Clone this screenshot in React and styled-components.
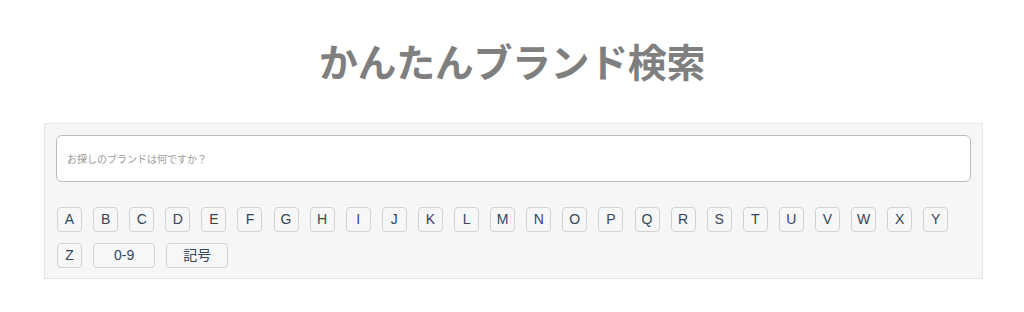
import React from "react";
import styled, { createGlobalStyle } from "styled-components";

const GlobalStyle = createGlobalStyle`
  body {
    margin: 0;
    background: #ffffff;
    font-family: "Liberation Sans", "Noto Sans CJK JP", sans-serif;
  }
`;

const Page = styled.div`
  width: 1024px;
  padding-top: 32px;
`;

const Title = styled.h1`
  margin: 0 0 35px;
  text-align: center;
  font-family: "Noto Sans CJK JP", sans-serif;
  font-weight: 700;
  font-size: 39px;
  line-height: 56px;
  color: #7f7f7f;
  letter-spacing: -0.4px;
`;

const Panel = styled.div`
  margin: 0 41px 0 44px;
  padding: 11px 11px 10px;
  background: #f6f6f6;
  border: 1px solid #e6e6e6;
`;

const SearchInput = styled.input`
  display: block;
  box-sizing: border-box;
  width: 100%;
  height: 47px;
  padding: 0 10px;
  border: 1px solid #bdbdbd;
  border-radius: 6px;
  background: #ffffff;
  font-family: "Noto Sans CJK JP", sans-serif;
  font-size: 10px;
  outline: none;
  &::placeholder {
    color: #9a9a9a;
  }
`;

const Keys = styled.div`
  display: flex;
  flex-wrap: wrap;
  column-gap: 11.1px;
  row-gap: 11px;
  margin-top: 25px;
  padding-left: 1px;
  width: 905px;
`;

const Key = styled.button`
  box-sizing: border-box;
  width: ${(p) => (p.$wide ? "62px" : "25px")};
  height: 25px;
  padding: 0;
  border: 1px solid #d2d2d2;
  border-radius: 4px;
  background: #f7f7f7;
  color: #34465a;
  font-family: "Liberation Sans", "Noto Sans CJK JP", sans-serif;
  font-size: 14px;
  line-height: 23px;
  text-align: center;
  cursor: pointer;
`;

const letters = "ABCDEFGHIJKLMNOPQRSTUVWXYZ".split("");

const App = () => {
  return (
    <Page>
      <GlobalStyle />
      <Title>かんたんブランド検索</Title>
      <Panel>
        <SearchInput type="search" placeholder="お探しのブランドは何ですか？" />
        <Keys>
          {letters.map((l) => (
            <Key key={l}>{l}</Key>
          ))}
          <Key $wide>0-9</Key>
          <Key $wide>記号</Key>
        </Keys>
      </Panel>
    </Page>
  );
};

export default App;
